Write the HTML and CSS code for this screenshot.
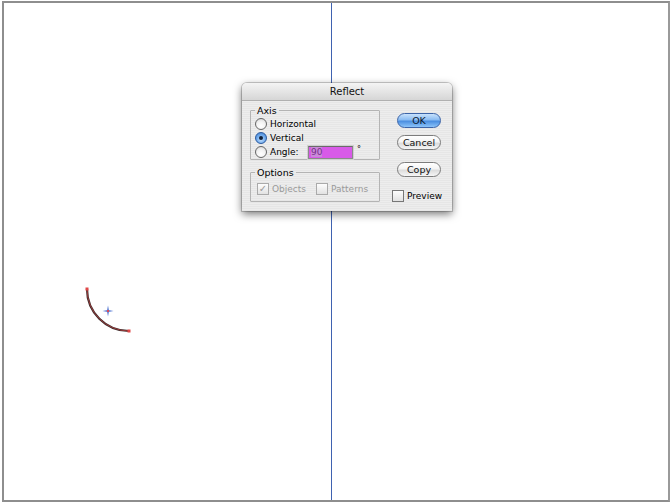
FILE: index.html
```html
<!DOCTYPE html>
<html>
<head>
<meta charset="utf-8">
<link rel="stylesheet" href="styles.css">
</head>
<body>
<div class="canvas">
  <div class="guide"></div>
  <svg class="arc" width="60" height="60" viewBox="0 0 60 60">
    <path d="M5 4 A42 42 0 0 0 47 46" fill="none" stroke="#3a2a2a" stroke-width="2.2"/>
    <path d="M5 4 A42 42 0 0 0 47 46" fill="none" stroke="#c44" stroke-width="0.8" opacity="0.8"/>
    <rect x="3.5" y="2.5" width="3" height="3" fill="#e04848"/>
    <rect x="45.5" y="44.5" width="3" height="3" fill="#e04848"/>
    <path d="M26 20.5 L27 25 L31.5 26 L27 27 L26 31.5 L25 27 L20.5 26 L25 25 Z" fill="#6b8ad8"/>
    <rect x="25" y="25" width="2" height="2" fill="#d84a5a"/>
  </svg>
  <div class="dialog">
    <div class="titlebar">Reflect</div>
    <div class="dbody">
      <div class="leftcol">
        <fieldset class="group axis">
          <legend>Axis</legend>
          <div class="row"><span class="radio"></span>Horizontal</div>
          <div class="row"><span class="radio on"></span>Vertical</div>
          <div class="row"><span class="radio"></span><span class="lbl">Angle:</span><span class="field"><span class="sel">90</span></span><span class="deg">°</span></div>
        </fieldset>
        <fieldset class="group options">
          <legend>Options</legend>
          <div class="row dis"><span class="check on">✓</span>Objects<span class="check gap"></span>Patterns</div>
        </fieldset>
      </div>
      <div class="rightcol">
        <div class="btn default">OK</div>
        <div class="btn">Cancel</div>
        <div class="btn third">Copy</div>
        <div class="prev"><span class="check"></span>Preview</div>
      </div>
    </div>
  </div>
</div>
</body>
</html>
```
FILE: styles.css
```css
html, body { margin: 0; padding: 0; background: #fff; }
body { font-family: "DejaVu Sans", "Liberation Sans", sans-serif; }
.canvas {
  position: relative;
  margin: 1px 0 0 2px;
  width: 664px;
  height: 497px;
  border: 2px solid #8e8e8e;
  border-right-color: #9a9a9a;
  background: #fff;
  overflow: hidden;
}
.guide {
  position: absolute;
  left: 327px;
  top: 0;
  bottom: 0;
  width: 1px;
  background: #3f62b0;
}
.arc { position: absolute; left: 78px; top: 282px; }
.dialog {
  position: absolute;
  left: 238px;
  top: 80px;
  width: 210px;
  height: 128px;
  background: repeating-linear-gradient(#ededed 0, #ededed 1px, #e6e6e6 1px, #e6e6e6 2px);
  border-radius: 5px 5px 0 0;
  box-shadow: 0 3px 9px rgba(0,0,0,0.55), 0 0 0 1px rgba(0,0,0,0.18);
  font-size: 9px;
  color: #000;
}
.titlebar {
  height: 17px;
  line-height: 17px;
  text-align: center;
  border-radius: 5px 5px 0 0;
  background: linear-gradient(#f4f4f4, #d6d6d6);
  border-bottom: 1px solid #b0b0b0;
  font-size: 10px;
  color: #111;
}
.dbody {
  display: flex;
  padding: 5px 0 0 8px;
}
.leftcol {
  width: 130px;
  display: flex;
  flex-direction: column;
  gap: 8px;
}
.group {
  margin: 0;
  padding: 1px 0 4px 4px;
  border: 1px solid #b4b4b4;
  border-radius: 1px;
  min-width: 0;
}
.group legend {
  padding: 0 2px;
  margin-left: 0;
  font-size: 9.5px;
  line-height: 9px;
}
.axis { height: 46px; padding-top: 2px; }
.options { height: 23px; padding-top: 5px; }
.row {
  display: flex;
  align-items: center;
  height: 14px;
  white-space: nowrap;
}
.radio {
  width: 10px;
  height: 10px;
  border-radius: 50%;
  border: 1px solid #666;
  background: radial-gradient(circle at 50% 70%, #fff 0, #f2f2f2 50%, #cfcfcf 100%);
  margin-right: 3px;
  position: relative;
  flex: none;
}
.radio.on {
  border-color: #2a5aa0;
  background: radial-gradient(circle at 50% 65%, #c6e2ff 0, #6aa6ea 55%, #3a78c8 100%);
}
.radio.on::after {
  content: "";
  position: absolute;
  left: 3px; top: 3px;
  width: 4px; height: 4px;
  border-radius: 50%;
  background: #10203a;
}
.lbl { width: 38px; }
.field {
  width: 41px;
  height: 11px;
  border: 1px solid #8a8a8a;
  border-top-color: #6a6a6a;
  outline: 1px solid #d0d0d0;
  background: #d85ae8;
  display: flex;
  align-items: center;
  padding-left: 2px;
}
.sel {
  background: #c98ad8;
  color: #7a2a8a;
  font-size: 9px;
  line-height: 10px;
}
.deg { margin-left: 4px; font-size: 8px; align-self: flex-start; margin-top: 0; }
.dis { color: #9a9a9a; padding-left: 2px; }
.check {
  width: 10px;
  height: 10px;
  border: 1px solid #aaa;
  background: linear-gradient(#fdfdfd, #e2e2e2);
  display: inline-flex;
  align-items: center;
  justify-content: center;
  font-size: 10px;
  line-height: 10px;
  color: #9a9a9a;
  margin-right: 3px;
  flex: none;
}
.prev .check { border-color: #777; }
.check.gap { margin-left: 10px; }
.rightcol {
  display: flex;
  flex-direction: column;
  align-items: flex-start;
  padding-left: 17px;
  padding-top: 7px;
}
.btn {
  width: 42px;
  height: 13px;
  line-height: 13px;
  text-align: center;
  border: 1px solid #7c7c7c;
  border-radius: 8px;
  background: linear-gradient(#ffffff 0, #f4f4f4 45%, #dcdcdc 55%, #f6f6f6 100%);
  margin-bottom: 7px;
  color: #111;
  font-size: 9.5px;
}
.btn.third { margin-top: 5px; }
.btn.default {
  border-color: #3c64a8;
  background: linear-gradient(#c8e2fc 0, #8abcf2 45%, #4a8ee0 55%, #8cc4fa 100%);
  color: #0c1a30;
}
.prev {
  display: flex;
  align-items: center;
  margin-top: 6px;
  margin-left: -5px;
}
```
